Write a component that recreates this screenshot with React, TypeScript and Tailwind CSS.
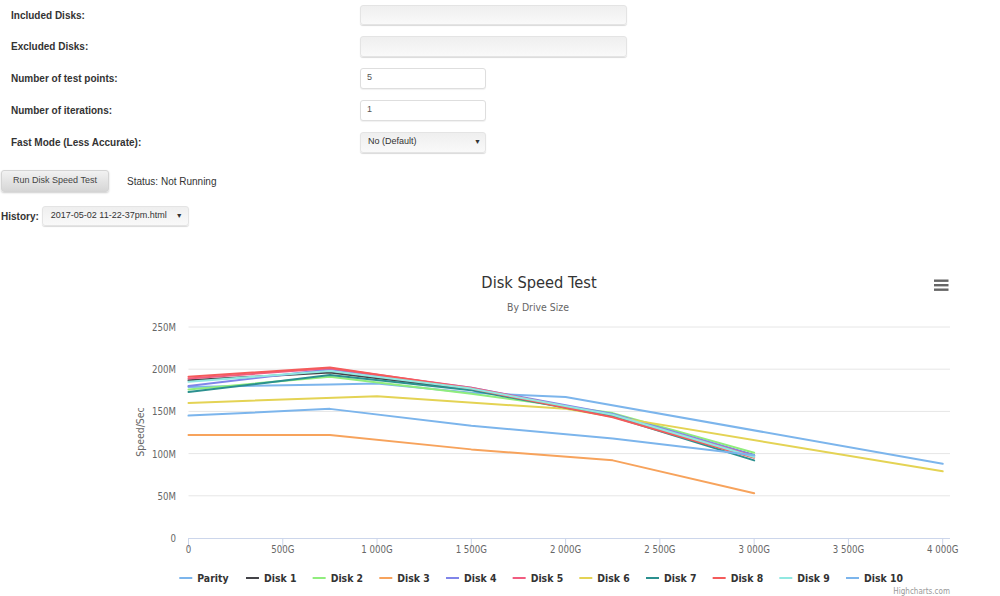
import React from "react";

type Series = { name: string; color: string; data: [number, number][] };

const series: Series[] = [
  { name: "Parity", color: "#7cb5ec", data: [[0, 179], [750, 182], [1000, 183], [1500, 172], [2000, 167], [4000, 88]] },
  { name: "Disk 1", color: "#434348", data: [[0, 187], [750, 196], [1500, 176], [2250, 145], [3000, 98]] },
  { name: "Disk 2", color: "#90ed7d", data: [[0, 176], [750, 191], [1500, 171], [2250, 148], [3000, 101]] },
  { name: "Disk 3", color: "#f7a35c", data: [[0, 122], [750, 122], [1500, 105], [2250, 92], [3000, 53]] },
  { name: "Disk 4", color: "#8085e9", data: [[0, 180], [750, 200], [1500, 178], [2250, 147], [3000, 98]] },
  { name: "Disk 5", color: "#f15c80", data: [[0, 189], [750, 201], [1500, 178], [2250, 145], [3000, 97]] },
  { name: "Disk 6", color: "#e4d354", data: [[0, 160], [1000, 168], [2000, 153], [4000, 79]] },
  { name: "Disk 7", color: "#2b908f", data: [[0, 173], [750, 193], [1500, 175], [2250, 144], [3000, 92]] },
  { name: "Disk 8", color: "#f45b5b", data: [[0, 191], [750, 202], [1500, 177], [2250, 143], [3000, 95]] },
  { name: "Disk 9", color: "#91e8e1", data: [[0, 185], [750, 198], [1500, 177], [2250, 146], [3000, 96]] },
  { name: "Disk 10", color: "#7cb5ec", data: [[0, 145], [750, 153], [1500, 133], [2250, 118], [3000, 98]] },
];

// chart svg starts at page y=240
const X = (g: number) => 188.5 + g * 0.18855;
const Y = (m: number) => 298 - m * 0.844;

const chartFont = "'DejaVu Sans Condensed','DejaVu Sans',sans-serif";

function Chart() {
  const xTicks = [0, 500, 1000, 1500, 2000, 2500, 3000, 3500, 4000];
  const yTicks = [0, 50, 100, 150, 200, 250];
  return (
    <svg width={1000} height={358} className="block" style={{ fontFamily: chartFont, fontStretch: "condensed" }}>
      <text x={539} y={47.5} textAnchor="middle" fontSize={16.3} fill="#333">Disk Speed Test</text>
      <text x={538} y={70.5} textAnchor="middle" fontSize={10.4} fill="#666">By Drive Size</text>

      <g fill="#666">
        <rect x={934} y={39.5} width={14.5} height={2.4} />
        <rect x={934} y={44} width={14.5} height={2.4} />
        <rect x={934} y={48.5} width={14.5} height={2.4} />
      </g>

      {yTicks.slice(1).map((m) => (
        <line key={m} x1={188.5} x2={950} y1={Y(m)} y2={Y(m)} stroke="#e6e6e6" strokeWidth={1} />
      ))}
      <line x1={188.5} x2={950} y1={298.5} y2={298.5} stroke="#ccd6eb" strokeWidth={1} />
      {xTicks.map((g) => (
        <line key={g} x1={X(g)} x2={X(g)} y1={298} y2={308} stroke="#ccd6eb" strokeWidth={1} />
      ))}

      {yTicks.map((m) => (
        <text key={m} x={176} y={Y(m) + 4} textAnchor="end" fontSize={9.6} fill="#666">
          {m === 0 ? "0" : `${m}M`}
        </text>
      ))}
      {xTicks.map((g) => (
        <text key={g} x={X(g)} y={313} textAnchor="middle" fontSize={9.6} fill="#666">
          {g === 0 ? "0" : g >= 1000 ? `${Math.floor(g / 1000)} ${String(g % 1000).padStart(3, "0")}G` : `${g}G`}
        </text>
      ))}
      <text x={144} y={192} textAnchor="middle" fontSize={10.4} fill="#666" transform="rotate(-90 144 192)">
        Speed/Sec
      </text>

      {series.map((s) => (
        <polyline
          key={s.name}
          points={s.data.map(([g, m]) => `${X(g)},${Y(m)}`).join(" ")}
          fill="none"
          stroke={s.color}
          strokeWidth={2}
          strokeLinejoin="round"
          strokeLinecap="round"
        />
      ))}

      {series.map((s, i) => {
        const sx = 179.3 + i * 66.67;
        return (
          <g key={s.name}>
            <line x1={sx} x2={sx + 13} y1={338} y2={338} stroke={s.color} strokeWidth={2} />
            <text x={sx + 18} y={342} fontSize={10.4} fontWeight="bold" fill="#333">{s.name}</text>
          </g>
        );
      })}

      <text x={950} y={354} textAnchor="end" fontSize={8} fill="#999">Highcharts.com</text>
    </svg>
  );
}

function Row({ label, first, children }: { label: string; first?: boolean; children: React.ReactNode }) {
  return (
    <div className={`flex items-center ${first ? "h-[30px]" : "h-8"}`}>
      <div className="w-[360px] pl-[11px] text-[10px] font-bold text-[#333]">{label}</div>
      {children}
    </div>
  );
}

const grayBox =
  "rounded-[3px] border border-[#e4e4e4] bg-linear-to-b from-[#efefef] to-[#f9f9f9] shadow-[0_1px_1px_rgba(0,0,0,0.15)]";

export default function App() {
  return (
    <div className="w-[1000px] h-[596px] overflow-hidden bg-white font-['Liberation_Sans',Arial,sans-serif] text-[#333]">
      <Row label="Included Disks:" first>
        <div className={`w-[267px] h-[20px] ${grayBox}`} />
      </Row>
      <Row label="Excluded Disks:">
        <div className={`w-[267px] h-[21px] ${grayBox}`} />
      </Row>
      <Row label="Number of test points:">
        <div className="w-[126px] h-[21px] rounded-[3px] border border-[#dedede] bg-white flex items-center pl-[6px] text-[9px] text-[#555] shadow-[0_1px_1px_rgba(0,0,0,0.06)]">
          5
        </div>
      </Row>
      <Row label="Number of iterations:">
        <div className="w-[126px] h-[21px] rounded-[3px] border border-[#dedede] bg-white flex items-center pl-[6px] text-[9px] text-[#555] shadow-[0_1px_1px_rgba(0,0,0,0.06)]">
          1
        </div>
      </Row>
      <Row label="Fast Mode (Less Accurate):">
        <div className={`w-[126px] h-[21px] flex items-center justify-between pl-[7px] pr-[4px] text-[9px] text-[#333] ${grayBox}`}>
          <span>No (Default)</span>
          <span className="text-[7px]">▼</span>
        </div>
      </Row>

      <div className="mt-3 flex items-center">
        <div className="ml-px w-[108px] h-[22px] rounded-[3px] border border-[#d4d4d4] bg-linear-to-b from-[#f2f2f2] to-[#d6d6d6] shadow-[0_1px_2px_rgba(0,0,0,0.2)] flex items-center justify-center text-[9px] text-[#444]">
          Run Disk Speed Test
        </div>
        <span className="ml-[18px] text-[10px] text-[#333]">Status: Not Running</span>
      </div>

      <div className="mt-[14px] flex items-center">
        <span className="ml-px text-[10px] font-bold text-[#333]">History:</span>
        <div className={`ml-[3px] w-[147px] h-[20px] flex items-center justify-between pl-[8px] pr-[5px] text-[9px] text-[#333] ${grayBox}`}>
          <span>2017-05-02 11-22-37pm.html</span>
          <span className="text-[7px]">▼</span>
        </div>
      </div>

      <div className="mt-[14px]">
        <Chart />
      </div>
    </div>
  );
}
